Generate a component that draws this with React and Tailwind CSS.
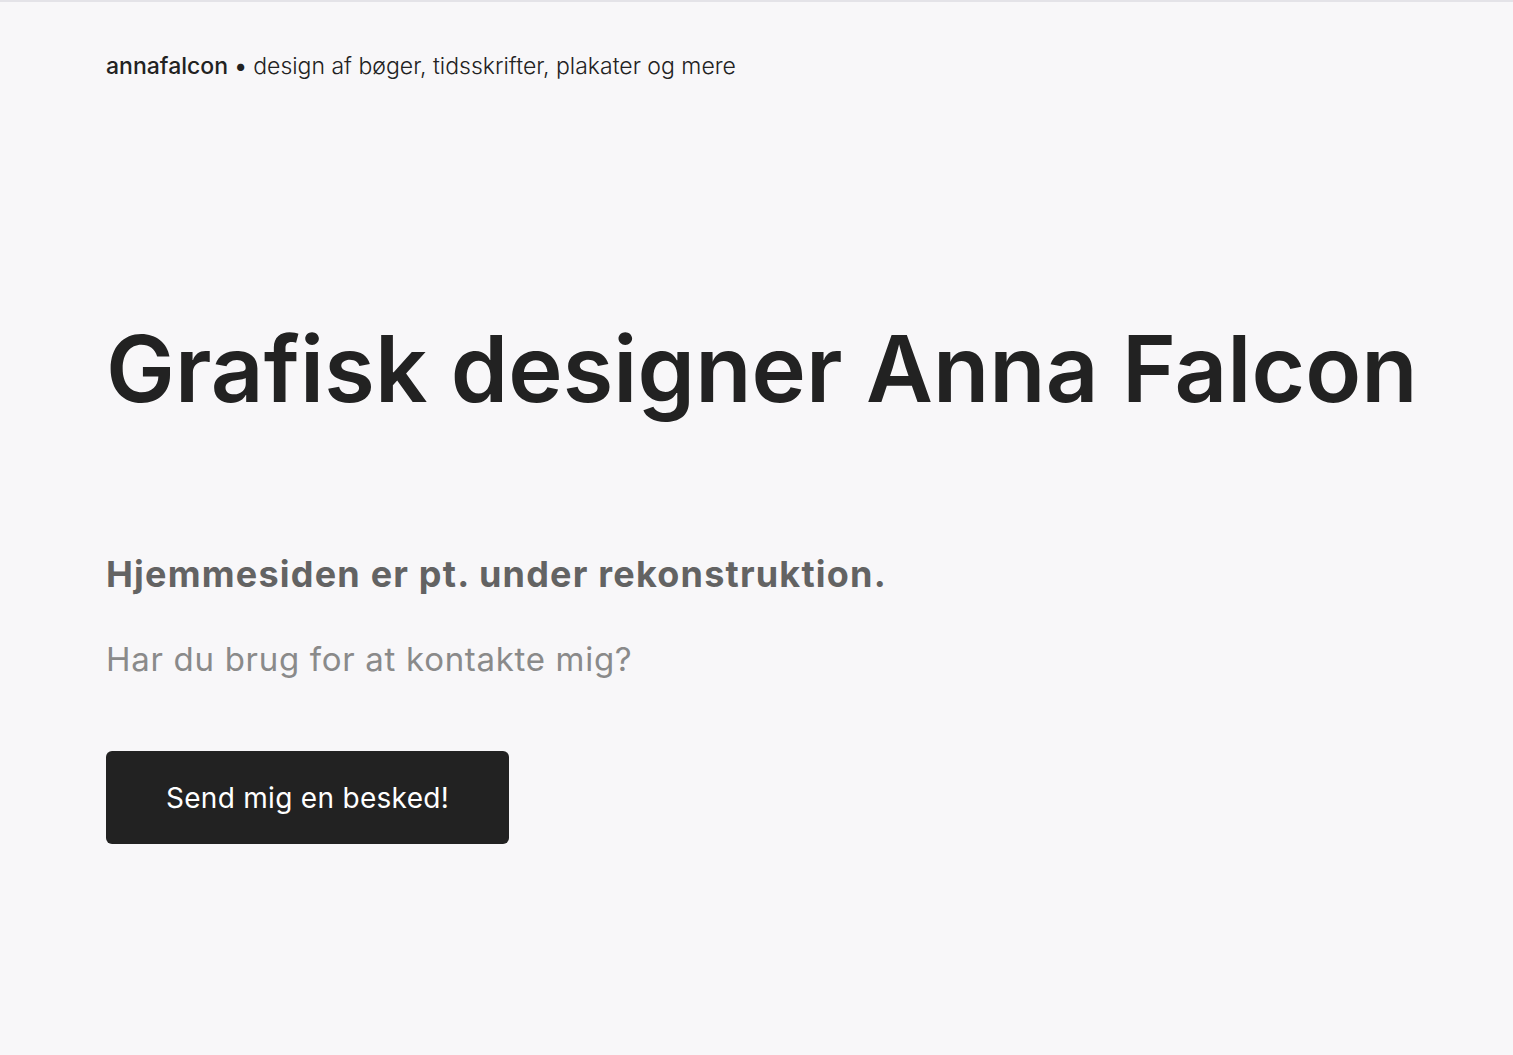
export default function App() {
  return (
    <div className="min-h-[1055px] bg-[#f8f7f9] border-t-2 border-[#e4e3e8] text-[#222222]" style={{ fontFamily: 'Inter, "Liberation Sans", sans-serif' }}>
      <div className="pl-[106px] pr-[40px]">
        <header className="pt-[48px] text-[23px] leading-[32px] tracking-[0px]">
          <span className="font-medium">annafalcon</span>
          <span className="font-light"> <span className="font-medium">•</span> design af bøger, tidsskrifter, plakater og mere</span>
        </header>
        <h1 className="mt-[231px] text-[92px] leading-[112px] font-semibold tracking-[0.1px] whitespace-nowrap">Grafisk designer Anna Falcon</h1>
        <h2 className="mt-[127px] text-[36px] leading-[44px] font-bold tracking-[1.2px] text-[#636363]">Hjemmesiden er pt. under rekonstruktion.</h2>
        <p className="mt-[43px] text-[33px] leading-[40px] tracking-[0.7px] text-[#8a8a8a]">Har du brug for at kontakte mig?</p>
        <button className="mt-[72px] w-[403px] h-[93px] bg-[#222222] rounded-[6px] text-white text-[28px] tracking-[0.3px]">Send mig en besked!</button>
      </div>
    </div>
  );
}
